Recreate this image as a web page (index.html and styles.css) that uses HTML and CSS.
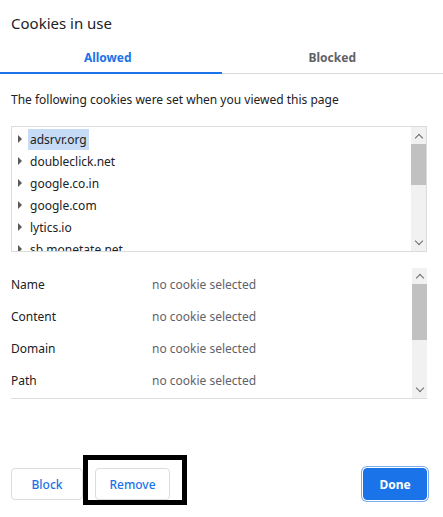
FILE: index.html
```html
<!DOCTYPE html>
<html>
<head>
<meta charset="utf-8">
<link rel="stylesheet" href="styles.css">
</head>
<body>
<div class="dialog">
  <div class="title">Cookies in use</div>
  <div class="tabs">
    <div class="tab active">Allowed</div>
    <div class="tab">Blocked</div>
  </div>
  <div class="intro">The following cookies were set when you viewed this page</div>
  <div class="tree">
    <div class="tree-list">
      <div class="node"><span class="tri"></span><span class="label selected">adsrvr.org</span></div>
      <div class="node"><span class="tri"></span><span class="label">doubleclick.net</span></div>
      <div class="node"><span class="tri"></span><span class="label">google.co.in</span></div>
      <div class="node"><span class="tri"></span><span class="label">google.com</span></div>
      <div class="node"><span class="tri"></span><span class="label">lytics.io</span></div>
      <div class="node"><span class="tri"></span><span class="label">sb.monetate.net</span></div>
    </div>
    <div class="scrollbar">
      <div class="arrow up"></div>
      <div class="track"><div class="thumb thumb-tree"></div></div>
      <div class="arrow down"></div>
    </div>
  </div>
  <div class="details">
    <div class="detail-list">
      <div class="drow"><span class="dkey">Name</span><span class="dval">no cookie selected</span></div>
      <div class="drow"><span class="dkey">Content</span><span class="dval">no cookie selected</span></div>
      <div class="drow"><span class="dkey">Domain</span><span class="dval">no cookie selected</span></div>
      <div class="drow"><span class="dkey">Path</span><span class="dval">no cookie selected</span></div>
    </div>
    <div class="scrollbar">
      <div class="arrow up"></div>
      <div class="track"><div class="thumb thumb-details"></div></div>
      <div class="arrow down"></div>
    </div>
  </div>
  <div class="buttons">
    <button class="btn">Block</button>
    <button class="btn remove">Remove<span class="annot"></span></button>
    <div class="spacer"></div>
    <button class="btn primary">Done</button>
  </div>
</div>
</body>
</html>
```
FILE: styles.css
```css
html, body {
  margin: 0;
  padding: 0;
  background: #fff;
}
body {
  width: 443px;
  height: 517px;
  overflow: hidden;
  font-family: "Noto Sans", "Open Sans", sans-serif;
  color: #202124;
}
.dialog {
  display: flex;
  flex-direction: column;
}
.title {
  font-size: 15px;
  line-height: 20px;
  padding: 13px 11px 0;
  height: 33px;
  box-sizing: border-box;
  color: #202124;
}
.tabs {
  display: flex;
  height: 41px;
  box-sizing: border-box;
}
.tab {
  flex: 1;
  text-align: center;
  font-size: 12px;
  font-weight: bold;
  color: #5f6368;
  padding-top: 16px;
  box-sizing: border-box;
  border-bottom: 1px solid #d9d9d9;
}
.tab.active {
  color: #1a73e8;
  border-bottom: 2px solid #1a73e8;
  text-indent: -6px;
}
.intro {
  font-size: 12px;
  line-height: 16px;
  padding: 18px 11px 0;
  height: 52px;
  box-sizing: border-box;
}
.tree {
  margin: 0 16px 0 11px;
  height: 126px;
  border: 1px solid #dcdcdc;
  box-sizing: border-box;
  display: flex;
  overflow: hidden;
}
.tree-list {
  flex: 1;
  padding-top: 1px;
  overflow: hidden;
}
.node {
  display: flex;
  align-items: center;
  height: 22px;
  font-size: 12px;
}
.tri {
  width: 0;
  height: 0;
  border-top: 4px solid transparent;
  border-bottom: 4px solid transparent;
  border-left: 4px solid #5a5a5a;
  margin: 0 6px 0 6px;
}
.label {
  padding: 0 2px;
  line-height: 21px;
}
.label.selected {
  background: #c6dcf6;
}
.scrollbar {
  width: 15px;
  background: #f1f1f1;
  display: flex;
  flex-direction: column;
}
.arrow {
  height: 17px;
  display: flex;
  align-items: center;
  justify-content: center;
}
.arrow::before {
  content: "";
  width: 5px;
  height: 5px;
  border-left: 1.6px solid #6a6a6a;
  border-top: 1.6px solid #6a6a6a;
}
.arrow.up::before {
  transform: translateY(2px) rotate(45deg);
}
.arrow.down::before {
  transform: translateY(-2px) rotate(225deg);
}
.track {
  flex: 1;
}
.thumb {
  background: #c1c1c1;
}
.thumb-tree {
  height: 41px;
}
.details {
  margin: 16px 16px 0 11px;
  height: 131px;
  border-bottom: 1px solid #dcdcdc;
  box-sizing: border-box;
  display: flex;
}
.detail-list {
  flex: 1;
  padding-top: 0;
}
.drow {
  display: flex;
  height: 32px;
  align-items: center;
  font-size: 12px;
}
.dkey {
  width: 141px;
  color: #202124;
}
.dval {
  color: #5f6368;
}
.details .arrow {
  height: 16px;
}
.thumb-details {
  height: 56px;
}
.buttons {
  display: flex;
  align-items: center;
  margin: 69px 16px 0 11px;
  gap: 12px;
}
.spacer {
  flex: 1;
}
.btn {
  height: 32px;
  box-sizing: border-box;
  border: 1px solid #dadce0;
  border-radius: 4px;
  background: #fff;
  color: #1a73e8;
  font-family: "Noto Sans", "Open Sans", sans-serif;
  font-size: 12px;
  font-weight: 500;
  padding: 0;
  width: 72px;
  position: relative;
}
.remove {
  width: 75px;
}
.primary {
  width: 64px;
  background: #1a73e8;
  color: #fff;
  font-weight: bold;
  border: 1px solid #1a73e8;
  box-shadow: 0 0 0 1px #fff, 0 0 0 2px #7eaaf0;
}
.annot {
  position: absolute;
  left: -13px;
  top: -14px;
  width: 104px;
  height: 50px;
  border: 5px solid #000;
  box-sizing: border-box;
}
```
